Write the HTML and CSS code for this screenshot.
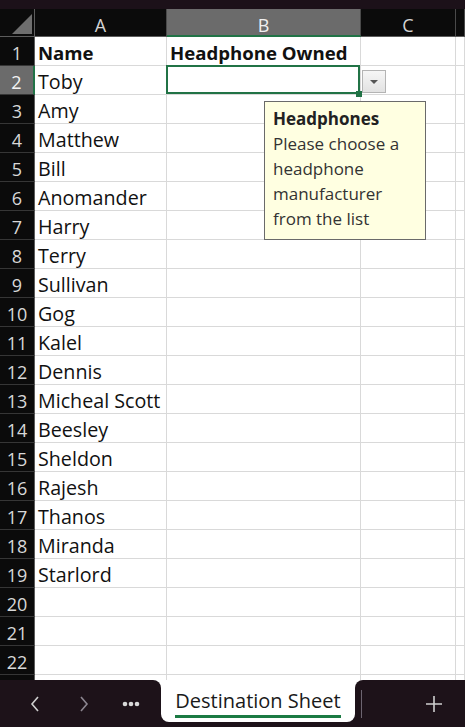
FILE: index.html
```html
<!DOCTYPE html>
<html lang="en">
<head>
    <meta charset="UTF-8">
    <meta name="viewport" content="width=device-width, initial-scale=1.0">
    <title>Destination Sheet</title>
    <link rel="stylesheet" href="styles.css">
</head>
<body>
    <div class="topbar"></div>

    <div class="sheet">
        <div class="corner"><span class="corner-tri"></span></div>
        <div class="colhead">A</div>
        <div class="colhead active">B</div>
        <div class="colhead">C</div>
        <div class="colhead"></div>

        <div class="rowhead">1</div><div class="cell bold">Name</div><div class="cell bold">Headphone Owned</div><div class="cell"></div><div class="cell"></div>
        <div class="rowhead active">2</div><div class="cell">Toby</div>
        <div class="cell selected">
            <span class="fill-handle"></span>
            <span class="dropdown-btn"><span class="arrow"></span></span>
            <div class="tooltip">
                <div class="tip-title">Headphones</div>
                <div>Please choose a<br>headphone<br>manufacturer<br>from the list</div>
            </div>
        </div>
        <div class="cell"></div><div class="cell"></div>
        <div class="rowhead">3</div><div class="cell">Amy</div><div class="cell"></div><div class="cell"></div><div class="cell"></div>
        <div class="rowhead">4</div><div class="cell">Matthew</div><div class="cell"></div><div class="cell"></div><div class="cell"></div>
        <div class="rowhead">5</div><div class="cell">Bill</div><div class="cell"></div><div class="cell"></div><div class="cell"></div>
        <div class="rowhead">6</div><div class="cell">Anomander</div><div class="cell"></div><div class="cell"></div><div class="cell"></div>
        <div class="rowhead">7</div><div class="cell">Harry</div><div class="cell"></div><div class="cell"></div><div class="cell"></div>
        <div class="rowhead">8</div><div class="cell">Terry</div><div class="cell"></div><div class="cell"></div><div class="cell"></div>
        <div class="rowhead">9</div><div class="cell">Sullivan</div><div class="cell"></div><div class="cell"></div><div class="cell"></div>
        <div class="rowhead">10</div><div class="cell">Gog</div><div class="cell"></div><div class="cell"></div><div class="cell"></div>
        <div class="rowhead">11</div><div class="cell">Kalel</div><div class="cell"></div><div class="cell"></div><div class="cell"></div>
        <div class="rowhead">12</div><div class="cell">Dennis</div><div class="cell"></div><div class="cell"></div><div class="cell"></div>
        <div class="rowhead">13</div><div class="cell">Micheal Scott</div><div class="cell"></div><div class="cell"></div><div class="cell"></div>
        <div class="rowhead">14</div><div class="cell">Beesley</div><div class="cell"></div><div class="cell"></div><div class="cell"></div>
        <div class="rowhead">15</div><div class="cell">Sheldon</div><div class="cell"></div><div class="cell"></div><div class="cell"></div>
        <div class="rowhead">16</div><div class="cell">Rajesh</div><div class="cell"></div><div class="cell"></div><div class="cell"></div>
        <div class="rowhead">17</div><div class="cell">Thanos</div><div class="cell"></div><div class="cell"></div><div class="cell"></div>
        <div class="rowhead">18</div><div class="cell">Miranda</div><div class="cell"></div><div class="cell"></div><div class="cell"></div>
        <div class="rowhead">19</div><div class="cell">Starlord</div><div class="cell"></div><div class="cell"></div><div class="cell"></div>
        <div class="rowhead">20</div><div class="cell"></div><div class="cell"></div><div class="cell"></div><div class="cell"></div>
        <div class="rowhead">21</div><div class="cell"></div><div class="cell"></div><div class="cell"></div><div class="cell"></div>
        <div class="rowhead">22</div><div class="cell"></div><div class="cell"></div><div class="cell"></div><div class="cell"></div>
        <div class="rowhead"></div><div class="cell"></div><div class="cell"></div><div class="cell"></div><div class="cell"></div>
    </div>

    <div class="tabbar">
        <div class="nav">
            <span class="nav-btn">
                <svg width="10" height="16" viewBox="0 0 10 16"><path d="M8 1 L2 8 L8 15" fill="none" stroke="#cfcfcf" stroke-width="1.6"/></svg>
            </span>
            <span class="nav-btn">
                <svg width="10" height="16" viewBox="0 0 10 16"><path d="M2 1 L8 8 L2 15" fill="none" stroke="#8c8690" stroke-width="1.6"/></svg>
            </span>
            <span class="nav-btn more">
                <svg width="18" height="6" viewBox="0 0 18 6"><circle cx="3" cy="3" r="2.3" fill="#d8d8d8"/><circle cx="9" cy="3" r="2.3" fill="#d8d8d8"/><circle cx="15" cy="3" r="2.3" fill="#d8d8d8"/></svg>
            </span>
        </div>
        <div class="tab-slot">
            <div class="tab"><span class="tab-label">Destination Sheet</span></div>
        </div>
        <div class="tab-rest">
            <span class="tab-sep"></span>
            <span class="add-btn">
                <svg width="18" height="18" viewBox="0 0 18 18"><path d="M9 1 V17 M1 9 H17" stroke="#cfcfcf" stroke-width="1.6"/></svg>
            </span>
        </div>
    </div>
</body>
</html>
```

FILE: styles.css
```css
* {
    box-sizing: border-box;
}
body {
    margin: 0;
    height: 727px;
    overflow: hidden;
    display: flex;
    flex-direction: column;
    background: white;
    font-family: 'Open Sans', sans-serif;
}
.topbar {
    height: 9px;
    background: #1c1119;
}
.sheet {
    flex: 1;
    overflow: hidden;
    display: grid;
    grid-template-columns: 35px 132px 194px 95px 1fr;
    grid-auto-rows: 29px;
    grid-template-rows: 28px;
}
.corner {
    background: #0b0b0b;
    border-right: 1px solid #5c5c5c;
    border-bottom: 1px solid #5c5c5c;
    position: relative;
}
.corner-tri {
    position: absolute;
    left: 12px;
    top: 5px;
    width: 20px;
    height: 20px;
    background: #6e6e6e;
    clip-path: polygon(100% 0, 100% 100%, 0 100%);
}
.colhead {
    background: #0b0b0b;
    color: #d4d4d4;
    font-size: 18px;
    text-align: center;
    line-height: 27px;
    padding-top: 3px;
    border-right: 1px solid #4a4a4a;
    border-bottom: 1px solid #5c5c5c;
}
.colhead.active {
    background: #6b6b6b;
    color: #f0f0f0;
    border-bottom: 2px solid #217346;
}
.rowhead {
    background: #0b0b0b;
    color: #d8d8d8;
    font-size: 18px;
    text-align: center;
    line-height: 28px;
    padding-top: 2px;
    border-right: 1px solid #5c5c5c;
    border-bottom: 1px solid #363636;
}
.rowhead.active {
    background: #6b6b6b;
    color: #f4f4f4;
    border-right: 2px solid #217346;
}
.cell {
    border-right: 1px solid #d9d9d9;
    border-bottom: 1px solid #d9d9d9;
    font-size: 19.7px;
    color: #111;
    padding-left: 3px;
    padding-top: 2px;
    line-height: 28px;
    white-space: nowrap;
}
.cell.bold {
    font-weight: 700;
    font-size: 18.6px;
}
.selected {
    position: relative;
    z-index: 2;
}
.selected::after {
    content: "";
    position: absolute;
    left: -1px;
    top: -1px;
    right: 0;
    bottom: 0;
    border: 2px solid #217346;
}
.fill-handle {
    position: absolute;
    right: -2px;
    bottom: -3px;
    width: 6px;
    height: 6px;
    background: #217346;
    z-index: 3;
}
.dropdown-btn {
    position: absolute;
    left: 195px;
    top: 4px;
    width: 24px;
    height: 23px;
    border: 1px solid #b4b4b4;
    background: linear-gradient(#f6f6f6, #e2e2e2);
    display: flex;
    align-items: center;
    justify-content: center;
}
.arrow {
    width: 0;
    height: 0;
    border-left: 4px solid transparent;
    border-right: 4px solid transparent;
    border-top: 4px solid #555;
}
.tooltip {
    position: absolute;
    left: 97px;
    top: 35px;
    width: 162px;
    padding: 4px 8px 8px;
    background: #ffffe1;
    border: 1px solid #6a6a6a;
    color: #333;
    font-size: 17px;
    line-height: 25px;
    white-space: nowrap;
}
.tip-title {
    font-weight: 700;
    color: #222;
}
.tabbar {
    height: 47px;
    display: flex;
    background: white;
}
.nav {
    width: 161px;
    background: #1d1219;
    border-top-right-radius: 8px;
    display: flex;
    align-items: center;
    padding-left: 27px;
    gap: 33px;
}
.nav-btn {
    display: flex;
    align-items: center;
    justify-content: center;
    width: 16px;
}
.nav-btn.more {
    width: 18px;
    margin-left: -3px;
}
.tab-slot {
    width: 194px;
    background: linear-gradient(white 50%, #1d1219 50%);
}
.tab {
    height: 42px;
    background: white;
    border-radius: 0 0 8px 8px;
    display: flex;
    align-items: center;
    justify-content: center;
}
.tab-label {
    font-size: 20px;
    color: #1a1a1a;
    line-height: 29px;
    border-bottom: 3px solid #1b7a43;
    margin-top: 1px;
}
.tab-rest {
    flex: 1;
    background: #1d1219;
    border-top-left-radius: 8px;
    display: flex;
    align-items: center;
}
.tab-sep {
    width: 1px;
    height: 28px;
    margin-left: 6px;
    background: #6c6470;
}
.add-btn {
    margin-left: 63px;
    display: flex;
}
```
